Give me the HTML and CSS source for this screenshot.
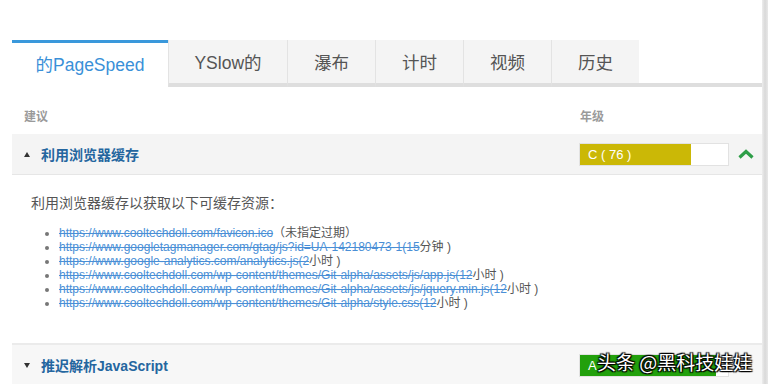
FILE: index.html
```html
<!DOCTYPE html>
<html lang="zh">
<head>
<meta charset="utf-8">
<link rel="stylesheet" href="styles.css">
</head>
<body>
<div class="page">
  <div class="main">
    <div class="tabs">
      <div class="tab active">的PageSpeed</div>
      <div class="tab t1">YSlow的</div>
      <div class="tab t2">瀑布</div>
      <div class="tab t2">计时</div>
      <div class="tab t2">视频</div>
      <div class="tab t2">历史</div>
      <div class="tabfill"></div>
    </div>
    <div class="grid head">
      <div class="label">建议</div>
      <div class="label">年级</div>
      <div></div>
    </div>
    <div class="grid row open">
      <div class="rtitle"><span class="tri up"></span>利用浏览器缓存</div>
      <div class="bar"><div class="fill yellow" style="width:75%">C ( 76 )</div></div>
      <div class="chev"><svg width="16" height="10" viewBox="0 0 16 10"><path d="M1.5 8.5 L8 2.5 L14.5 8.5" fill="none" stroke="#2e9e48" stroke-width="3.2"/></svg></div>
    </div>
    <div class="detail">
      <p class="intro">利用浏览器缓存以获取以下可缓存资源：</p>
      <ul class="res">
        <li><a>https://www.cooltechdoll.com/favicon.ico</a>（未指定过期）</li>
        <li><a>https://www.googletagmanager.com/gtag/js?id=UA-142180473-1(15</a>分钟 )</li>
        <li><a>https://www.google-analytics.com/analytics.js(2</a>小时 )</li>
        <li><a>https://www.cooltechdoll.com/wp-content/themes/Git-alpha/assets/js/app.js(12</a>小时 )</li>
        <li><a>https://www.cooltechdoll.com/wp-content/themes/Git-alpha/assets/js/jquery.min.js(12</a>小时 )</li>
        <li><a>https://www.cooltechdoll.com/wp-content/themes/Git-alpha/style.css(12</a>小时 )</li>
      </ul>
    </div>
    <div class="grid row closed">
      <div class="rtitle"><span class="tri down"></span>推迟解析JavaScript</div>
      <div class="bar"><div class="fill green" style="width:92%">A</div></div>
      <div class="chev"></div>
    </div>
  </div>
  <div class="strip"></div>
  <div class="watermark">头条 @黑科技娃娃</div>
</div>
</body>
</html>
```
FILE: styles.css
```css
html, body {
  margin: 0;
  padding: 0;
  background: #fff;
  height: 384px;
  overflow: hidden;
}
body {
  font-family: "Liberation Sans", "Noto Sans CJK SC", sans-serif;
  color: #555;
}
.page {
  position: relative;
  display: flex;
  height: 384px;
}
.main {
  flex: 1;
  padding: 40px 0 0 12px;
  min-width: 0;
}
.strip {
  width: 6px;
  background: linear-gradient(to right, #ededed, #d9d9d9 50%, #e8e8e8);
}
.tabs {
  display: flex;
  height: 47px;
}
.tab {
  box-sizing: border-box;
  display: flex;
  align-items: center;
  justify-content: center;
  font-size: 17.5px;
  color: #555;
  background: #f4f4f4;
  border-bottom: 4px solid #dedede;
  border-left: 1px solid #e3e3e3;
}
.tab.active {
  width: 156px;
  color: #3a90d8;
  background: #fff;
  border-top: 3px solid #3a98db;
  border-left: none;
  border-bottom: none;
  padding-bottom: 4px;
}
.tab.t1 { width: 119px; }
.tab.t2 { width: 88px; }
.tabfill {
  flex: 1;
  border-bottom: 4px solid #dedede;
}
.grid {
  display: grid;
  grid-template-columns: 1fr 150px 33px;
  align-items: center;
}
.head {
  height: 47px;
  align-items: end;
}
.label {
  font-size: 12px;
  line-height: 14px;
  font-weight: bold;
  color: #9a9a9a;
  padding: 0 0 10px 12px;
}
.label + .label {
  padding-left: 1px;
}
.row {
  height: 40px;
  background: #f4f4f4;
}
.row.open {
  border-bottom: 1px solid #e6e6e6;
}
.row.closed {
  border-top: 2px solid #ebebeb;
  background: #f7f7f7;
}
.rtitle {
  display: flex;
  align-items: center;
  padding-left: 12px;
  font-size: 14px;
  font-weight: bold;
  color: #24669f;
}
.tri {
  width: 0;
  height: 0;
  margin-right: 11px;
  border-left: 3.5px solid transparent;
  border-right: 3.5px solid transparent;
}
.tri.up { border-bottom: 5px solid #333; }
.tri.down { border-top: 5px solid #333; }
.bar {
  box-sizing: border-box;
  height: 23px;
  background: #fff;
  border: 1px solid #e2e2e2;
  display: flex;
}
.fill {
  height: 100%;
  color: #fff;
  font-size: 13px;
  line-height: 21px;
  padding-left: 8px;
  box-sizing: border-box;
  white-space: nowrap;
  overflow: hidden;
}
.yellow { background: #cbb806; }
.green { background: #22a00c; }
.chev {
  display: flex;
  justify-content: center;
  align-items: center;
}
.detail {
  height: 168px;
  padding: 18px 0 0 19px;
  box-sizing: border-box;
}
.intro {
  margin: 0;
  font-size: 14px;
  line-height: 20px;
  color: #555;
}
.res {
  margin: 13px 0 0 0;
  padding-left: 28px;
  font-size: 12px;
  line-height: 14px;
  color: #555;
}
.res li {
  white-space: nowrap;
}
.res li::marker {
  color: #777;
}
.res a {
  color: #4a8fd6;
  text-decoration: line-through;
}
.watermark {
  position: absolute;
  left: 597px;
  top: 350px;
  font-size: 19px;
  line-height: 24px;
  color: #fff;
  font-family: "Noto Sans CJK SC", sans-serif;
  text-shadow: 0 0 2px #000, 1px 1px 1px #000, -1px -1px 1px #000, 1px -1px 1px #000, -1px 1px 1px #000;
  white-space: nowrap;
}
```
